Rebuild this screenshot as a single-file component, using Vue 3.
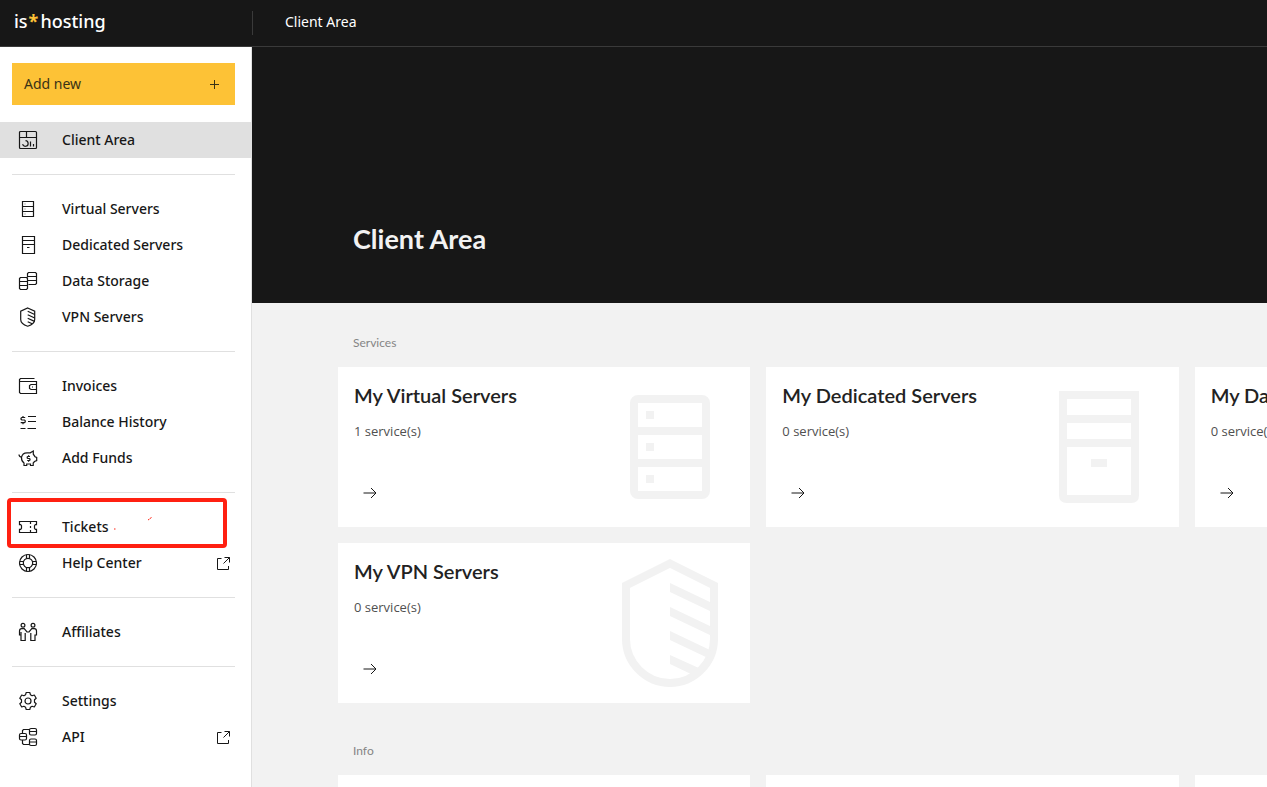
<script setup>
const groups = [
  [{ label: 'Client Area', icon: 'dashboard', active: true }],
  [
    { label: 'Virtual Servers', icon: 'virtual' },
    { label: 'Dedicated Servers', icon: 'dedicated' },
    { label: 'Data Storage', icon: 'storage' },
    { label: 'VPN Servers', icon: 'vpn' },
  ],
  [
    { label: 'Invoices', icon: 'wallet' },
    { label: 'Balance History', icon: 'history' },
    { label: 'Add Funds', icon: 'piggy' },
  ],
  [
    { label: 'Tickets', icon: 'ticket', marked: true },
    { label: 'Help Center', icon: 'help', external: true },
  ],
  [{ label: 'Affiliates', icon: 'affiliates' }],
  [
    { label: 'Settings', icon: 'settings' },
    { label: 'API', icon: 'api', external: true },
  ],
]

const icons = {
  dashboard:
    '<rect x="1.5" y="1.5" width="17" height="17" rx="1"/><path d="M1.5 7.5h17M8.5 1.5v6M7.5 10.7a2.8 2.8 0 1 1-2.9 3.4M12.5 11.5v5M15.5 14v2.5"/>',
  virtual:
    '<path d="M4.5 2.5h11v15h-11zM4.5 7.5h11M4.5 12.5h11"/><path opacity=".6" d="M6.5 5h1M6.5 10h1M6.5 15h1"/>',
  dedicated: '<path d="M4.5 1.5h12v17h-12zM4.5 5.5h12M4.5 9.5h12M9 12.5h2.5"/>',
  storage:
    '<path d="M9.5 6.5v-4l1-1h7l1 1v10l-1 1h-7M9.5 5.5h9M9.5 9.5h9M1.5 7.5l1-1h6l1 1v10l-1 1h-6l-1-1zM1.5 10.5h8M1.5 14.5h8"/>',
  vpn:
    '<path d="M9.7 1l7 3.2v8.3c0 3.2-3 5.5-7 6.7-4-1.2-7-3.5-7-6.7V4.2z"/><path d="M9.7 4.200l7 3.300M9.700 7.700l7 3.300M9.700 11.200l6.800 3.200M9.700 14.700l4.500 2.100"/>',
  wallet:
    '<path d="M16.5 2.5h-14l-1 1v13l1 1h16v-12h-17M18.5 8.5h-5.5l-1.5 1v3l1.500 1h5.500M14 11h1"/>',
  history:
    '<path d="M7.200 5.500H3.800L3 6.200v1l.8.800h2.700l.7.700v1.300l-.7.700H2.700M5 4v1.500M5 10.700v1.500M10 4.500h8M10 9.500h8M2.500 16.500h5M9.500 16.500h8.500"/>',
  piggy:
    '<path d="M1 6.500c0 1.700 1.300 2.500 2.700 2.500M3.500 9.500c.5-3 2.700-4.700 5.500-4.700h3.200L15.300 3v3.200L17 8.700l1.700.800v3l-2.200 1-1.300 1.500v2.500h-2.700V16H8.700v1.500H6V15c-1.700-1.200-2.700-3-2.500-5.500z"/><path d="M12 8.500H9.800l-.6.600v.8l.6.600h1.600l.6.600v.8l-.6.600H9.200M10.600 7.300v1.200M10.600 12.500v1.200"/>',
  ticket:
    '<path d="M1.500 4.500h17v3.200h-1.200l-.8 1v2.600l.8 1h1.200v3.200h-17v-3.200h1.200l.8-1V8.700l-.8-1H1.500z"/><path d="M12.500 5v2M12.500 9v2M12.500 13v2"/>',
  help:
    '<circle cx="10" cy="10" r="8.500"/><circle cx="10" cy="10" r="4.700"/><path d="M8.500 1.500v4M11.500 1.500v4M8.500 14.500v4M11.500 14.500v4M1.500 8.500h4M1.500 11.500h4M14.500 8.500h4M14.500 11.500h4"/>',
  affiliates:
    '<circle cx="5" cy="3.200" r="1.900"/><circle cx="15" cy="3.200" r="1.900"/><path d="M3 13H1.500V9c0-1.500.8-2.300 2.200-2.300h2.500L9 10h2l2.800-3.300h2.500c1.400 0 2.200.8 2.200 2.300v4H17v5.500h-4.200V11M7.200 11v7.500H3V10"/>',
  settings:
    '<circle cx="10" cy="10" r="3"/><path d="M8.200 1.500h3.600l.6 2.200 1.700 1 2.200-.7 1.900 3.200-1.700 1.600v2.400l1.700 1.600-1.900 3.200-2.200-.7-1.700 1-.6 2.200H8.200l-.6-2.200-1.700-1-2.200.7-1.900-3.200 1.700-1.600V8.800L1.800 7.200 3.700 4l2.200.7 1.700-1z" stroke-linejoin="round"/>',
  api:
    '<rect x="1.500" y="6.500" width="7" height="6.500" rx="1.500"/><rect x="11.500" y="1.500" width="7" height="6.500" rx="1.500"/><rect x="11.500" y="12" width="7" height="6.500" rx="1.500"/><path d="M1.500 9.500h7M11.500 4.500h7M11.500 15h7M11.500 2.500h-6l-1 1v3M11.500 17.500h-6l-1-1V13"/>',
}

const services = [
  { title: 'My Virtual Servers', count: 1, art: 'virtual' },
  { title: 'My Dedicated Servers', count: 0, art: 'dedicated' },
  { title: 'My Data Storage', count: 0, art: null },
  { title: 'My VPN Servers', count: 0, art: 'vpn' },
]
</script>

<template>
  <div class="page">
    <header class="topbar">
      <div class="brand"><a href="#" class="logo">is<span class="star">*</span>hosting</a></div>
      <a href="#" class="crumb">Client Area</a>
    </header>

    <div class="body">
      <aside class="sidebar">
        <button type="button" class="add">
          <span>Add new</span>
          <svg width="11" height="11" viewBox="0 0 11 11" aria-hidden="true"><path d="M5.500 1v9M1 5.500h9" /></svg>
        </button>
        <nav>
          <ul v-for="(group, g) in groups" :key="g" class="group">
            <li v-for="item in group" :key="item.label" class="item">
              <a href="#" class="link" :class="{ active: item.active }">
                <svg class="icon" viewBox="0 0 20 20" aria-hidden="true" v-html="icons[item.icon]"></svg>
                <span class="label">{{ item.label }}</span>
                <svg v-if="item.external" class="external" viewBox="0 0 13 13" aria-hidden="true">
                  <path d="M4.500 1.500h-4v11h11V9M7.500 .5h5V5.500M12.500 .5L6.500 6.500" />
                </svg>
              </a>
              <div v-if="item.marked" class="mark" aria-hidden="true">
                <svg viewBox="0 0 212 42"><path d="M103 27h1.500M137 18l1.500-1M139 16.500l1.500-1" /></svg>
              </div>
            </li>
          </ul>
        </nav>
      </aside>

      <main class="main">
        <div class="hero"><h1>Client Area</h1></div>

        <section class="section">
          <h2 class="caption">Services</h2>
          <div class="grid">
            <article v-for="s in services" :key="s.title" class="card">
              <h3>{{ s.title }}</h3>
              <p>{{ s.count }} service(s)</p>
              <a href="#" class="go" :aria-label="s.title">
                <svg width="14" height="12" viewBox="0 0 14 12"><path d="M.5 6h12.500M8 1l5 5-5 5" /></svg>
              </a>
              <svg v-if="s.art" class="art" viewBox="0 0 128 128" aria-hidden="true">
                <template v-if="s.art === 'virtual'">
                  <rect x="28" y="16" width="72" height="96" rx="4" />
                  <path d="M28 48h72M28 80h72M40 32h8M40 64h8M40 96h8" />
                </template>
                <template v-else-if="s.art === 'dedicated'">
                  <path d="M28 12h72v100q0 4-4 4H32q-4 0-4-4zM28 36h72M28 60h72M56 80h16" />
                </template>
                <template v-else>
                  <path d="M64 4.500l44 22V80c0 24-20 44-44 44S20 104 20 80V26.500z" />
                  <path
                    class="stripe"
                    d="M64 24l42 20v9L64 33zM64 48l42 20v9L64 57zM64 72l42 20-3 7.500L64 81zM64 96l31 14-8 6-23-11z"
                  />
                </template>
              </svg>
            </article>
          </div>
        </section>

        <section class="section">
          <h2 class="caption">Info</h2>
          <div class="grid">
            <article v-for="n in 3" :key="n" class="card"></article>
          </div>
        </section>
      </main>
    </div>
  </div>
</template>

<style>
body {
  margin: 0;
}
</style>

<style scoped>
.page {
  height: 100vh;
  overflow: hidden;
  display: flex;
  flex-direction: column;
  background: #f2f2f2;
  color: #171717;
  font-family: 'Noto Sans', 'Open Sans', sans-serif;
  font-size: 14px;
  line-height: 20px;
}
a {
  color: inherit;
  text-decoration: none;
}
svg {
  display: block;
  flex: none;
  fill: none;
  stroke: currentColor;
}
.topbar {
  flex: none;
  display: flex;
  align-items: center;
  height: 46px;
  border-bottom: 1px solid #3a3a3a;
  background: #171717;
  color: #fff;
}
.brand {
  box-sizing: border-box;
  width: 253px;
  height: 24px;
  padding-left: 14px;
  border-right: 1px solid #3a3a3a;
}
.logo {
  font-size: 18px;
  font-weight: 500;
  line-height: 20px;
}
.star {
  margin: 0 2px 0 1px;
  color: #fdc236;
  font-weight: 700;
}
.crumb {
  padding: 0 32px 2px;
}
.body {
  flex: 1;
  min-height: 0;
  display: flex;
}
.sidebar {
  flex: none;
  box-sizing: border-box;
  width: 252px;
  padding-top: 16px;
  border-right: 1px solid #e0e0e0;
  background: #fff;
}
.add {
  box-sizing: border-box;
  display: flex;
  align-items: center;
  justify-content: space-between;
  width: 223px;
  height: 42px;
  margin: 0 0 17px 12px;
  padding: 0 15px 0 12px;
  border: 0;
  background: #fdc236;
  color: #3a3216;
  font: inherit;
}
.group {
  margin: 0;
  padding: 0;
  list-style: none;
}
.group + .group::before {
  content: '';
  display: block;
  height: 1px;
  margin: 16px 16px 16px 12px;
  background: #e0e0e0;
}
.item {
  position: relative;
}
.link {
  display: flex;
  align-items: center;
  height: 36px;
  padding: 0 21px 0 18px;
  font-weight: 500;
}
.active {
  background: #e0e0e0;
}
.icon {
  width: 20px;
  height: 20px;
  margin-right: 24px;
  stroke-width: 1.2px;
}
.label {
  flex: 1;
}
.external {
  width: 13px;
  height: 13px;
}
.mark {
  position: absolute;
  top: -11px;
  left: 7px;
  box-sizing: border-box;
  width: 220px;
  height: 50px;
  border: 4px solid #ff2011;
  border-radius: 4px;
  color: #ff2011;
  pointer-events: none;
}
.main {
  flex: 1;
  min-width: 0;
  overflow: hidden;
}
.hero {
  box-sizing: border-box;
  height: 256px;
  padding: 172px 0 0 101px;
  background: #171717;
  color: #f2f2f2;
}
h1,
h3,
.caption {
  font-family: Lato, 'Noto Sans', sans-serif;
}
h1 {
  margin: 0;
  font-size: 27px;
  font-weight: 700;
  line-height: 40px;
}
.section {
  padding: 32px 0 8px 86px;
}
.caption {
  margin: 0 0 16px 15px;
  color: #858585;
  font-size: 12px;
  font-weight: 400;
  line-height: 16px;
}
.grid {
  display: grid;
  grid-template-columns: repeat(3, 1fr);
  gap: 16px;
  min-width: 1269px;
}
.card {
  position: relative;
  box-sizing: border-box;
  height: 160px;
  padding: 16px;
  background: #fff;
}
h3 {
  margin: 0;
  color: #222;
  font-size: 20px;
  font-weight: 600;
  line-height: 24px;
}
.card p {
  margin: 16px 0 0;
  color: #505050;
  font-family: 'Open Sans', sans-serif;
  font-size: 13px;
  line-height: 16px;
}
.go {
  display: flex;
  align-items: center;
  width: 34px;
  height: 32px;
  margin-top: 38px;
  padding-left: 9px;
}
.art {
  position: absolute;
  top: 16px;
  right: 16px;
  width: 128px;
  height: 128px;
  color: #f2f2f2;
  stroke-width: 8px;
}
.stripe {
  fill: currentColor;
  stroke: none;
}
</style>
